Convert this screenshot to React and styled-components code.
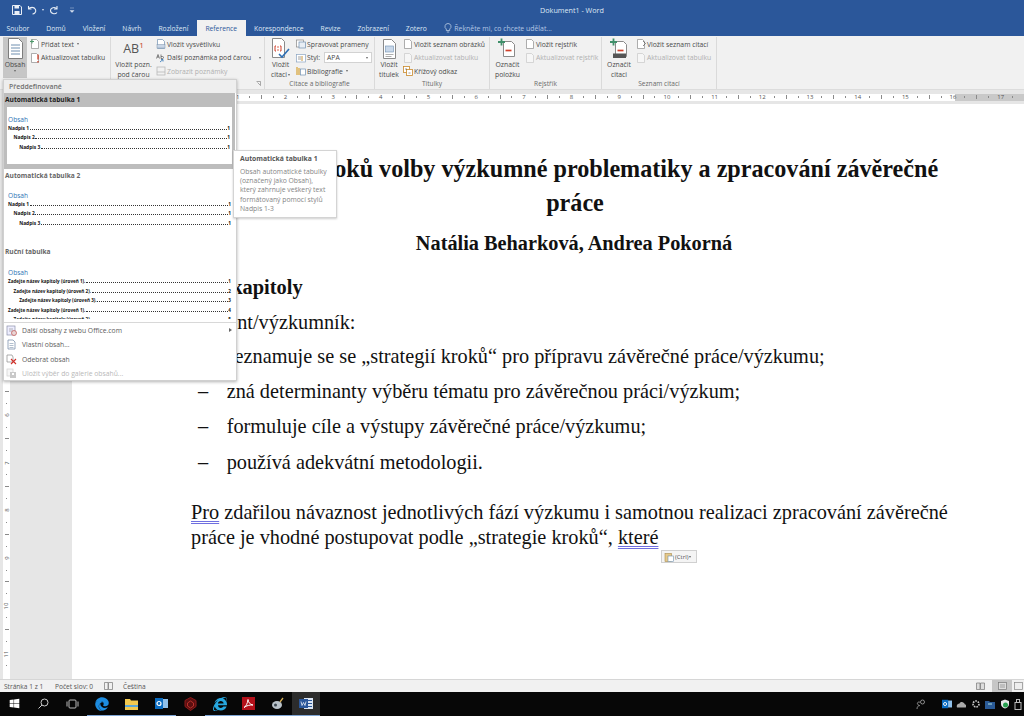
import React from 'react'
import styled, { createGlobalStyle } from 'styled-components'
import { FaEdge, FaInternetExplorer, FaWindows } from 'react-icons/fa'

const GlobalStyle = createGlobalStyle`
  html, body { margin: 0; padding: 0; background: #fff; }
  body { font-family: "Open Sans", "Liberation Sans", sans-serif; }
`

const Screen = styled.div`
  position: relative;
  width: 1024px;
  height: 716px;
  display: flex;
  flex-direction: column;
  overflow: hidden;
`

/* title bar + tabs */
const TitleBar = styled.div`
  height: 20px;
  background: #2b579a;
  color: #dfe7f3;
  display: flex;
  align-items: center;
  position: relative;
  padding-left: 12px;
  gap: 5px;
  flex: none;
`
const QatIcon = styled.svg`
  flex: none;
  margin-left: ${p => p.$ml || 0}px;
`
const DocTitle = styled.div`
  position: absolute;
  left: 0;
  right: 0;
  padding-left: 120px;
  text-align: center;
  font-size: 7.2px;
`
const TabBar = styled.div`
  height: 16px;
  background: #2b579a;
  display: flex;
  align-items: stretch;
  flex: none;
`
const Tab = styled.div`
  padding: 0 8.5px;
  display: flex;
  align-items: center;
  font-size: 6.75px;
  white-space: nowrap;
  margin-left: ${p => p.$first ? '-2px' : '0'};
  color: ${p => p.$active ? '#2b579a' : '#dfe7f3'};
  background: ${p => p.$active ? '#f1f1f1' : 'transparent'};
`
const TellMe = styled.div`
  display: flex;
  align-items: center;
  gap: 2px;
  margin-left: 9px;
  font-size: 6.9px;
  color: #b4c7e4;
`

/* ribbon */
const Ribbon = styled.div`
  height: 54px;
  background: #f1f1f1;
  display: flex;
  flex: none;
  border-bottom: 1px solid #dcdcdc;
  box-sizing: border-box;
`
const Group = styled.div`
  width: ${p => p.$w}px;
  box-sizing: border-box;
  display: flex;
  flex-direction: column;
  border-right: 1px solid #dadada;
  margin-top: 1px;
  padding-left: 3px;
  position: relative;
`
const GroupBody = styled.div`
  flex: 1;
  display: flex;
  gap: 3px;
`
const GroupLabel = styled.div`
  height: 11px;
  line-height: 12px;
  font-size: 6.6px;
  color: #6a6a6a;
  text-align: center;
  margin-right: 3px;
`
const Launcher = styled.svg`
  position: absolute;
  right: 3px;
  bottom: 3px;
  width: 5px;
  height: 5px;
`
const BigButton = styled.div`
  width: ${p => p.$w}px;
  height: 41px;
  display: flex;
  flex-direction: column;
  align-items: center;
  font-size: 6.8px;
  line-height: 9.6px;
  color: #4a4a4a;
  text-align: center;
  background: ${p => p.$active ? '#c6c6c6' : 'transparent'};
  svg { flex: none; }
`
const BigIconBox = styled.div`
  height: 23px;
  display: flex;
  align-items: center;
  justify-content: center;
  flex: none;
`
const FootMark = styled.sup`
  font-size: 8px;
  color: #c43e1c;
  line-height: 0;
`
const NoteGlyph = styled.div`
  font-size: 12.5px;
  color: #555;
`
const SmallCol = styled.div`
  display: flex;
  flex-direction: column;
  padding-top: 0.5px;
`
const SmallRow = styled.div`
  height: 13.5px;
  display: flex;
  align-items: center;
  gap: 1px;
  font-size: 6.8px;
  white-space: nowrap;
  color: ${p => p.$off ? '#b0b0b0' : '#4a4a4a'};
  svg { flex: none; }
`
const Caret = styled.span`
  display: inline-block;
  width: 0;
  height: 0;
  border-left: 1.7px solid transparent;
  border-right: 1.7px solid transparent;
  border-top: 2px solid ${p => p.$color || '#666'};
  margin-left: ${p => p.$gap ?? 2}px;
  vertical-align: middle;
`
const StyleSelect = styled.div`
  width: 48px;
  height: 11px;
  margin-left: 3px;
  background: #fff;
  border: 1px solid #d2d2d2;
  box-sizing: border-box;
  display: flex;
  align-items: center;
  justify-content: space-between;
  padding: 0 3px 0 2px;
`

/* rulers */
const Ruler = styled.div`
  height: 14px;
  background: #e6e6e6;
  display: flex;
  align-items: center;
  flex: none;
`
const RulerStrip = styled.div`
  width: 100%;
  height: 7px;
  display: flex;
  align-items: center;
  padding-left: 196px;
  box-sizing: border-box;
  overflow: hidden;
  background: linear-gradient(to right, #e6e6e6 72px, #fff 72px, #fff 955px, #c9c9c9 955px);
`
const Mark = styled.span`
  flex: none;
  width: ${p => p.$vertical ? '100%' : '11.925px'};
  height: ${p => p.$vertical ? '11.925px' : '100%'};
  display: flex;
  align-items: center;
  justify-content: center;
  font-size: 6px;
  color: #555;
`
const Tick = styled.i`
  display: block;
  background: #8a8a8a;
  width: ${p => p.$vertical ? (p.$tall ? '4px' : '1.4px') : '1px'};
  height: ${p => p.$vertical ? '1px' : (p.$tall ? '4px' : '1.4px')};
`
const VLabel = styled.span`
  transform: rotate(-90deg);
`

const Workspace = styled.div`
  flex: 1;
  display: flex;
  min-height: 0;
`
const Gutter = styled.div`
  width: 72px;
  flex: none;
  background: #e6e6e6;
  display: flex;
  padding-left: 3px;
  box-sizing: border-box;
`
const VRuler = styled.div`
  width: 7px;
  background: #fff;
  padding-top: 19px;
  box-sizing: border-box;
  display: flex;
  flex-direction: column;
  overflow: hidden;
`
const Page = styled.div`
  flex: 1;
  background: #fff;
  padding: 48px 67px 0 119px;
  color: #111;
  font-family: "Liberation Serif", "Times New Roman", serif;
  font-size: 20.3px;
  overflow: hidden;
`
const Title = styled.h1`
  margin: 0;
  padding-left: 2px;
  font-size: 24.15px;
  line-height: 34px;
  font-weight: bold;
  text-align: center;
`
const Authors = styled.div`
  margin-top: 11px;
  font-weight: bold;
  font-size: 20.3px;
  line-height: 24px;
  text-align: center;
`
const Heading = styled.h2`
  margin: 19px 0 0;
  font-size: 20.4px;
  line-height: 26px;
`
const Lead = styled.p`
  margin: 9px 0 0;
  line-height: 26px;
`
const Bullets = styled.ul`
  list-style: none;
  margin: 4px 0 0;
  padding: 0;
`
const Bullet = styled.li`
  height: 35.2px;
  line-height: 35.2px;
  display: flex;
  padding-left: 7px;
  gap: 18.5px;
`
const Para = styled.p`
  margin: 20px 0 0;
  line-height: 25px;
`
const Squiggle = styled.span`
  text-decoration: underline double #6f6fe0 1px;
  text-underline-offset: 2px;
`

/* Obsah dropdown */
const Dropdown = styled.div`
  position: absolute;
  left: 3px;
  top: 79px;
  width: 234px;
  height: 302px;
  background: #fff;
  border: 1px solid #d0d0d0;
  box-sizing: border-box;
  box-shadow: 0 1px 3px rgba(0,0,0,.3);
  display: flex;
  flex-direction: column;
`
const DropHead = styled.div`
  height: 13px;
  flex: none;
  background: #eee;
  font-size: 6.9px;
  font-weight: 600;
  line-height: 13px;
  padding-left: 5px;
  color: #707070;
`
const Gallery = styled.div`
  flex: none;
  background: ${p => p.$hot ? '#bdbdbd' : '#fff'};
  padding: 0 3px ${p => p.$hot ? '5px' : 0} 3px;
  box-sizing: border-box;
  height: ${p => p.$h}px;
  margin-right: ${p => p.$hot ? '1px' : 0};
  overflow: hidden;
`
const GalleryName = styled.div`
  height: 13.5px;
  line-height: 13.5px;
  font-size: 6.6px;
  font-weight: 700;
  margin-left: -2px;
  color: ${p => p.$hot ? '#222' : '#666'};
`
const Preview = styled.div`
  background: #fff;
  height: ${p => p.$h}px;
  padding: ${p => p.$top}px 2px 0 1px;
  overflow: hidden;
  box-sizing: border-box;
`
const PreviewTitle = styled.div`
  font-size: 6.6px;
  height: 9px;
  line-height: 9px;
  color: #2e74b5;
`
const TocRow = styled.div`
  height: 9.5px;
  display: flex;
  align-items: baseline;
  font-size: ${p => p.$manual ? '4.6px' : '4.9px'};
  line-height: 9.5px;
  font-weight: 700;
  color: #111;
  white-space: nowrap;
  padding-left: ${p => p.$level * 5.6}px;
`
const Leader = styled.span`
  flex: 1;
  border-bottom: 1px dotted #333;
  margin: 0 0.5px;
`
const DropMenu = styled.div`
  border-top: 1px solid #d8d8d8;
  flex: 1;
  display: flex;
  flex-direction: column;
`
const MenuRow = styled.div`
  height: 14.5px;
  display: flex;
  align-items: center;
  padding: 0 4px 0 2px;
  font-size: 6.8px;
  color: ${p => p.$off ? '#b8b8b8' : '#5c5c5c'};
`
const MenuIcon = styled.div`
  width: 16px;
  flex: none;
  display: flex;
`
const MenuText = styled.span`
  flex: 1;
`
const MenuArrow = styled.span`
  width: 0;
  height: 0;
  border-top: 2px solid transparent;
  border-bottom: 2px solid transparent;
  border-left: 3px solid #666;
`

const Tip = styled.div`
  position: absolute;
  left: 233px;
  top: 150px;
  width: 104px;
  height: 68px;
  box-sizing: border-box;
  background: #fff;
  border: 1px solid #d4d4d4;
  box-shadow: 0 1px 2px rgba(0,0,0,.2);
  padding: 3px 2px 0 6px;
  font-size: 6.8px;
  line-height: 9.3px;
  color: #858585;
`
const TipTitle = styled.div`
  font-weight: 700;
  color: #555;
  margin-bottom: 3.5px;
`
const PasteChip = styled.div`
  position: absolute;
  left: 661px;
  top: 550px;
  width: 36px;
  height: 13px;
  box-sizing: border-box;
  background: #f4f4f4;
  border: 1px solid #d0d0d0;
  font-size: 6px;
  color: #555;
  display: flex;
  align-items: center;
  padding-left: 2px;
  gap: 1px;
`

/* status + taskbar */
const StatusBar = styled.div`
  height: 13px;
  flex: none;
  background: #f1f1f1;
  border-top: 1px solid #d6d6d6;
  box-sizing: border-box;
  display: flex;
  align-items: center;
  padding-left: 4px;
  font-size: 6.6px;
  color: #555;
`
const StatusItem = styled.span`
  width: ${p => p.$w}px;
  flex: none;
  display: flex;
  align-items: center;
`
const ViewButtons = styled.div`
  margin-left: auto;
  display: flex;
  height: 100%;
  align-items: stretch;
`
const ViewButton = styled.div`
  width: ${p => p.$w}px;
  display: flex;
  align-items: center;
  justify-content: center;
  background: ${p => p.$active ? '#c6c6c6' : 'transparent'};
`
const Taskbar = styled.div`
  height: 24px;
  flex: none;
  background: #070707;
  display: flex;
  align-items: stretch;
`
const TaskApp = styled.div`
  width: ${p => p.$w || 29}px;
  flex: none;
  box-sizing: border-box;
  display: flex;
  align-items: center;
  justify-content: center;
  background: ${p => p.$active ? '#2c2c2c' : 'transparent'};
  border-bottom: 1.5px solid ${p => p.$running ? '#7fa6d6' : 'transparent'};
  background-clip: padding-box;
`
const Tray = styled.div`
  margin-left: auto;
  display: flex;
  align-items: center;
  gap: 4.5px;
  padding-right: 2px;
`
const TraySpacer = styled.span`
  width: 7px;
`

/* icons */
const Sheet = ({ c = '#8c8c8c' }) => <path d="M1.500.5h5l2 2v7h-7z" fill="#fff" stroke={c} strokeWidth=".7" />

const Small = ({ kind }) => (
  <svg width="10" height="10" viewBox="0 0 10 10">
    {kind === 'add' && <><Sheet /><path d="M0 2.500h4M2 .5v4" stroke="#4c9a6a" strokeWidth="1" /></>}
    {kind === 'update' && <><Sheet /><path d="M8 1.500v5M8 8v1.400" stroke="#d0402a" strokeWidth="1.300" /></>}
    {kind === 'updateOff' && <g opacity=".4"><Sheet /></g>}
    {kind === 'end' && <><Sheet c="#6f8fb0" /><rect x="1" y="5.500" width="8" height="3.500" fill="#c9d6e6" stroke="#7c93ad" strokeWidth=".5" /></>}
    {kind === 'next' && <><path d="M.5 5.500l1.500-4 1.500 4M1 4h2M5 1.500v4h1.500a1 1 0 0 0 0-2H5" fill="none" stroke="#555" strokeWidth=".7" /><path d="M4 9l3-2.500M7 6.500v2M7 6.500H5" fill="none" stroke="#2e74b5" strokeWidth=".8" /></>}
    {kind === 'show' && <g opacity=".4"><rect x="1" y="1" width="8" height="8" fill="none" stroke="#555" strokeWidth=".7" /><path d="M1 6h8" stroke="#555" strokeWidth=".7" /></g>}
    {kind === 'manage' && <><rect x=".5" y="1" width="7" height="7" fill="#fff" stroke="#888" strokeWidth=".7" /><rect x="3" y="3" width="6.500" height="6" fill="#e8eef5" stroke="#6f8fb0" strokeWidth=".7" /></>}
    {kind === 'style' && <><rect x=".5" y="1.500" width="9" height="7.500" fill="#fff" stroke="#8aa4c2" strokeWidth=".7" /><path d="M2 4h3M2 6h3" stroke="#777" strokeWidth=".7" /><path d="M6 3v5" stroke="#c08a2b" strokeWidth=".9" /></>}
    {kind === 'bib' && <><path d="M1 1v8M3 2v7" stroke="#d49a20" strokeWidth="1.100" /><rect x="4.500" y="3" width="5" height="6" fill="#fff" stroke="#6f8fb0" strokeWidth=".7" /></>}
    {kind === 'cross' && <><rect x=".5" y=".5" width="6" height="6" fill="#fff" stroke="#c9892b" strokeWidth=".8" /><rect x="3.500" y="3.500" width="6" height="6" fill="#fff" stroke="#c9892b" strokeWidth=".8" /><path d="M2 3h2M5.500 7h2" stroke="#555" strokeWidth=".6" /></>}
    {kind === 'page' && <Sheet />}
    {kind === 'pageInk' && <><Sheet /><path d="M7 2l2.500 2.500L7 7" fill="none" stroke="#555" strokeWidth=".7" /></>}
  </svg>
)

const Big = ({ kind }) => {
  if (kind === 'toc') return (
    <svg width="17" height="21" viewBox="0 0 17 21">
      <path d="M1.500.5h10l4 4v16h-14z" fill="#fff" stroke="#7d7d7d" />
      <path d="M4 7h9M4 10h9M4 13h9M4 16h9" stroke="#6f8fb0" strokeWidth="1" />
    </svg>
  )
  if (kind === 'citation') return (
    <svg width="19" height="21" viewBox="0 0 19 21">
      <path d="M1.500.5h9l3 3v16h-12z" fill="#fff" stroke="#8a8a8a" />
      <path d="M5 8H4v5h1M9 8h1v5H9" stroke="#d0402a" fill="none" />
      <path d="M6 9h2M6 12h2" stroke="#d0402a" strokeWidth=".8" />
      <path d="M8 16l3 3 7-8" stroke="#2f6fb5" strokeWidth="1.600" fill="none" />
    </svg>
  )
  if (kind === 'caption') return (
    <svg width="15" height="20" viewBox="0 0 15 20">
      <path d="M1.500.5h8l4 4v15h-12z" fill="#fff" stroke="#8a8a8a" />
      <rect x="3.500" y="7" width="8" height="6" fill="#c9d8ea" stroke="#6f8fb0" strokeWidth=".6" />
      <path d="M3.500 15.500h8M3.500 17.500h6" stroke="#999" strokeWidth=".8" />
    </svg>
  )
  return (
    <svg width="19" height="21" viewBox="0 0 19 21">
      <path d="M5.500 3.500h8l3 3v12h-11z" fill="#fff" stroke="#8a8a8a" />
      <path d="M0 4h7M3.500.5v7" stroke="#3f8f6a" strokeWidth="1.800" />
      <path d="M7.500 12.500h6" stroke="#d0402a" strokeWidth="1.700" />
      {kind === 'markCite' && <rect x="3" y="15.500" width="13" height="4.500" fill="#555" />}
    </svg>
  )
}

const MenuGlyph = ({ kind }) => (
  <svg width="11" height="11" viewBox="0 0 11 11">
    {kind === 'web' && <><rect x="1" y="1" width="8" height="9" fill="#eef" stroke="#8a8fa8" strokeWidth=".7" /><path d="M3 4h4M3 6h4" stroke="#888" strokeWidth=".6" /><circle cx="8" cy="8" r="2.500" fill="#e9d6d6" stroke="#c0504d" strokeWidth=".7" /></>}
    {kind === 'own' && <><path d="M2 1h5l2 2v7H2z" fill="#fff" stroke="#7d93ad" strokeWidth=".8" /><path d="M3.500 4.500h4M3.500 6.500h4M3.500 8.500h4" stroke="#7d93ad" strokeWidth=".6" /></>}
    {kind === 'remove' && <><path d="M1 1h5l1 2v5H1z" fill="#fff" stroke="#8a8a8a" strokeWidth=".7" /><path d="M5 5l5 5M10 5l-5 5" stroke="#d0302a" strokeWidth="1.100" /></>}
    {kind === 'save' && <g opacity=".45"><rect x="1" y="1" width="6" height="7" fill="#eee" stroke="#999" strokeWidth=".7" /><rect x="4" y="4" width="6" height="6" fill="#888" /><rect x="6" y="5" width="2" height="2" fill="#fff" /></g>}
  </svg>
)

const ManualRows = [
  [0, 'Zadejte název kapitoly (úroveň 1).', 1],
  [1, 'Zadejte název kapitoly (úroveň 2).', 2],
  [2, 'Zadejte název kapitoly (úroveň 3).', 3],
  [0, 'Zadejte název kapitoly (úroveň 1).', 4],
  [1, 'Zadejte název kapitoly (úroveň 2).', 5],
]
const AutoRows = [[0, 'Nadpis 1', 1], [1, 'Nadpis 2', 1], [2, 'Nadpis 3', 1]]

function Toc({ rows, manual }) {
  return (
    <>
      <PreviewTitle>Obsah</PreviewTitle>
      {rows.map(([level, text, page], i) => (
        <TocRow key={i} $level={level} $manual={manual}>
          {text}<Leader />{page}
        </TocRow>
      ))}
    </>
  )
}

function HRulerMarks() {
  const marks = []
  for (let i = 1; i < 70; i++) {
    marks.push(
      <Mark key={i}>
        {i % 4 === 0 ? i / 4 : <Tick $tall={i % 2 === 0} />}
      </Mark>
    )
  }
  return marks
}

function VRulerMarks() {
  const marks = []
  for (let i = 0; i < 46; i++) {
    marks.push(
      <Mark key={i} $vertical>
        {i % 4 === 0 ? <VLabel>{i / 4}</VLabel> : <Tick $vertical $tall={i % 2 === 0} />}
      </Mark>
    )
  }
  return marks
}

const tabs = ['Soubor', 'Domů', 'Vložení', 'Návrh', 'Rozložení', 'Reference', 'Korespondence', 'Revize', 'Zobrazení', 'Zotero']

const bullets = [
  'seznamuje se se „strategií kroků“ pro přípravu závěrečné práce/výzkumu;',
  'zná determinanty výběru tématu pro závěrečnou práci/výzkum;',
  'formuluje cíle a výstupy závěrečné práce/výzkumu;',
  'používá adekvátní metodologii.',
]

const AcrobatIcon = () => (
  <svg width="13" height="13" viewBox="0 0 13 13">
    <rect width="13" height="13" fill="#b3101a" />
    <path d="M2 10.500c2-1 3.500-4 4-8 .3 3 2 5 5 5.500-3-.2-6.500.5-9 2.500z" fill="none" stroke="#fff" strokeWidth="1" />
  </svg>
)
const ExplorerIcon = () => (
  <svg width="13" height="12" viewBox="0 0 13 12">
    <path d="M0 1h5l1 1.500h7V12H0z" fill="#f2c94f" />
    <rect y="7" width="13" height="2" fill="#5aa7d8" />
  </svg>
)
const OutlookTile = ({ size = 13 }) => (
  <svg width={size} height={size} viewBox="0 0 13 13">
    <rect x="5" y="2" width="8" height="9" fill="#8fc0ea" />
    <rect y="1" width="8" height="11" fill="#0a6bc0" />
    <circle cx="4" cy="6.500" r="2" fill="none" stroke="#fff" strokeWidth="1.200" />
  </svg>
)
const ShieldIcon = () => (
  <svg width="13" height="14" viewBox="0 0 13 14">
    <path d="M6.500.5l5.500 3v6l-5.500 4-5.500-4v-6z" fill="#5a0f10" stroke="#8f1a1a" />
    <path d="M6.500 4l3 2v3l-3 2-3-2V6z" fill="none" stroke="#b8302a" />
  </svg>
)
const SatelliteIcon = () => (
  <svg width="14" height="14" viewBox="0 0 14 14">
    <ellipse cx="6" cy="8" rx="5" ry="4" fill="#b9c2c9" />
    <circle cx="4.500" cy="8" r="1.500" fill="#3b4650" />
    <path d="M9 5l3-4" stroke="#d9b25a" strokeWidth="1.300" />
  </svg>
)
const WordIcon = () => (
  <svg width="14" height="13" viewBox="0 0 14 13">
    <rect x="5" y="1" width="9" height="11" fill="#dce6f4" />
    <path d="M9 3.500h4M9 6.500h4M9 9.500h4" stroke="#2b579a" strokeWidth="1" />
    <rect y="2" width="9" height="9" fill="#2b579a" />
    <path d="M2 4.500l1 4 1.500-3 1.500 3 1-4" fill="none" stroke="#fff" strokeWidth=".7" />
  </svg>
)
const TaskViewIcon = () => (
  <svg width="13" height="10" viewBox="0 0 13 10">
    <rect x="3" y="1" width="7" height="8" rx="1" fill="none" stroke="#bbb" />
    <path d="M1 2.500v5M12 2.500v5" stroke="#bbb" />
  </svg>
)
const SearchIcon = () => (
  <svg width="11" height="11" viewBox="0 0 11 11">
    <circle cx="6.500" cy="4.500" r="3.500" fill="none" stroke="#ccc" />
    <path d="M4 7l-3.500 3.500" stroke="#ccc" />
  </svg>
)

export default function App() {
  return (
    <Screen>
      <GlobalStyle />
      <TitleBar>
        <QatIcon width="10" height="10" viewBox="0 0 10 10">
          <path d="M.5.500h7.500l1.500 1.500v7.500h-9z" fill="none" stroke="#e8eef6" />
          <rect x="2.500" y="1" width="4.500" height="2.500" fill="#e8eef6" />
          <rect x="2.500" y="6" width="5" height="3" fill="#e8eef6" />
        </QatIcon>
        <QatIcon width="10" height="10" viewBox="0 0 10 10">
          <path d="M1.500 1v3h3M1.500 4C3 2 7 1.500 8.500 4.500 9.500 7 7.500 9 5.500 9" fill="none" stroke="#e8eef6" strokeWidth="1.100" />
        </QatIcon>
        <Caret $color="#dfe7f3" $gap={0} />
        <QatIcon width="10" height="10" viewBox="0 0 10 10">
          <path d="M8 1v3H5M8 4C6 1.500 1.500 2.500 1.500 5.500S6 10 8 7.500" fill="none" stroke="#e8eef6" strokeWidth="1.100" />
        </QatIcon>
        <QatIcon $ml={5} width="6" height="6" viewBox="0 0 6 6">
          <path d="M1 1h4M1 3.500h4l-2 2z" fill="#dfe7f3" stroke="#dfe7f3" strokeWidth=".4" />
        </QatIcon>
        <DocTitle>Dokument1 - Word</DocTitle>
      </TitleBar>

      <TabBar>
        {tabs.map((t, i) => (
          <Tab key={t} $first={i === 0} $active={t === 'Reference'}>{t}</Tab>
        ))}
        <TellMe>
          <svg width="8" height="10" viewBox="0 0 8 10">
            <path d="M4 .5a3 3 0 0 1 1.700 5.500V7.500H2.300V6A3 3 0 0 1 4 .5zM2.800 9h2.400" fill="none" stroke="#cfdcee" strokeWidth=".7" />
          </svg>
          Řekněte mi, co chcete udělat...
        </TellMe>
      </TabBar>

      <Ribbon>
        <Group $w={111}>
          <GroupBody>
            <BigButton $w={24} $active>
              <BigIconBox><Big kind="toc" /></BigIconBox>
              Obsah
              <Caret $gap={0} />
            </BigButton>
            <SmallCol>
              <SmallRow><Small kind="add" />Přidat text<Caret /></SmallRow>
              <SmallRow><Small kind="update" />Aktualizovat tabulku</SmallRow>
            </SmallCol>
          </GroupBody>
        </Group>

        <Group $w={154}>
          <GroupBody>
            <BigButton $w={39}>
              <BigIconBox><NoteGlyph>AB<FootMark>1</FootMark></NoteGlyph></BigIconBox>
              Vložit pozn.<br />pod čarou
            </BigButton>
            <SmallCol>
              <SmallRow><Small kind="end" />Vložit vysvětlivku</SmallRow>
              <SmallRow><Small kind="next" />Další poznámka pod čarou<Caret $gap={7} /></SmallRow>
              <SmallRow $off><Small kind="show" />Zobrazit poznámky</SmallRow>
            </SmallCol>
          </GroupBody>
          <Launcher viewBox="0 0 5 5"><path d="M.5.500h4v4M1.500 1.500l3 3" fill="none" stroke="#777" strokeWidth=".6" /></Launcher>
        </Group>

        <Group $w={110}>
          <GroupBody>
            <BigButton $w={25}>
              <BigIconBox><Big kind="citation" /></BigIconBox>
              <span>Vložit<br />citaci<Caret $gap={1} /></span>
            </BigButton>
            <SmallCol>
              <SmallRow><Small kind="manage" />Spravovat prameny</SmallRow>
              <SmallRow><Small kind="style" />Styl:<StyleSelect>APA<Caret /></StyleSelect></SmallRow>
              <SmallRow><Small kind="bib" />Bibliografie<Caret /></SmallRow>
            </SmallCol>
          </GroupBody>
          <GroupLabel>Citace a bibliografie</GroupLabel>
        </Group>

        <Group $w={115}>
          <GroupBody>
            <BigButton $w={22}>
              <BigIconBox><Big kind="caption" /></BigIconBox>
              Vložit<br />titulek
            </BigButton>
            <SmallCol>
              <SmallRow><Small kind="page" />Vložit seznam obrázků</SmallRow>
              <SmallRow $off><Small kind="updateOff" />Aktualizovat tabulku</SmallRow>
              <SmallRow><Small kind="cross" />Křížový odkaz</SmallRow>
            </SmallCol>
          </GroupBody>
          <GroupLabel>Titulky</GroupLabel>
        </Group>

        <Group $w={112}>
          <GroupBody>
            <BigButton $w={29}>
              <BigIconBox><Big kind="mark" /></BigIconBox>
              Označit<br />položku
            </BigButton>
            <SmallCol>
              <SmallRow><Small kind="page" />Vložit rejstřík</SmallRow>
              <SmallRow $off><Small kind="updateOff" />Aktualizovat rejstřík</SmallRow>
            </SmallCol>
          </GroupBody>
          <GroupLabel>Rejstřík</GroupLabel>
        </Group>

        <Group $w={115}>
          <GroupBody>
            <BigButton $w={28}>
              <BigIconBox><Big kind="markCite" /></BigIconBox>
              Označit<br />citaci
            </BigButton>
            <SmallCol>
              <SmallRow><Small kind="pageInk" />Vložit seznam citací</SmallRow>
              <SmallRow $off><Small kind="updateOff" />Aktualizovat tabulku</SmallRow>
            </SmallCol>
          </GroupBody>
          <GroupLabel>Seznam citací</GroupLabel>
        </Group>
      </Ribbon>

      <Ruler>
        <RulerStrip><HRulerMarks /></RulerStrip>
      </Ruler>

      <Workspace>
        <Gutter>
          <VRuler><VRulerMarks /></VRuler>
        </Gutter>
        <Page>
          <Title>Strategie kroků volby výzkumné problematiky a zpracování závěrečné práce</Title>
          <Authors>Natália Beharková, Andrea Pokorná</Authors>
          <Heading>Cíle kapitoly</Heading>
          <Lead>Student/výzkumník:</Lead>
          <Bullets>
            {bullets.map(t => (
              <Bullet key={t}><span>–</span><span>{t}</span></Bullet>
            ))}
          </Bullets>
          <Para>
            <Squiggle>Pro</Squiggle> zdařilou návaznost jednotlivých fází výzkumu i samotnou realizaci zpracování závěrečné práce je vhodné postupovat podle „strategie kroků“, <Squiggle>které</Squiggle>
          </Para>
        </Page>
      </Workspace>

      <StatusBar>
        <StatusItem $w={51}>Stránka 1 z 1</StatusItem>
        <StatusItem $w={49}>Počet slov: 0</StatusItem>
        <StatusItem $w={19}>
          <svg width="9" height="8" viewBox="0 0 9 8"><path d="M.5.500h3.500v7H.5zM4.500.500h4v7h-4z" fill="none" stroke="#777" strokeWidth=".7" /></svg>
        </StatusItem>
        <StatusItem $w={30}>Čeština</StatusItem>
        <ViewButtons>
          <ViewButton $w={23}>
            <svg width="9" height="8" viewBox="0 0 9 8"><path d="M.5 1h3.500v6.500H.5zM4.500 1h4v6.500h-4z" fill="#ddd" stroke="#777" strokeWidth=".7" /></svg>
          </ViewButton>
          <ViewButton $w={20} $active>
            <svg width="9" height="8" viewBox="0 0 9 8"><rect x=".5" y=".5" width="8" height="7" fill="#ddd" stroke="#777" strokeWidth=".7" /><path d="M2 3h5M2 5h5" stroke="#777" strokeWidth=".6" /></svg>
          </ViewButton>
          <ViewButton $w={12}>
            <svg width="9" height="8" viewBox="0 0 9 8"><rect x=".5" y=".5" width="8" height="7" fill="#eee" stroke="#888" strokeWidth=".7" /></svg>
          </ViewButton>
        </ViewButtons>
      </StatusBar>

      <Taskbar>
        <TaskApp><FaWindows size={11} color="#fff" /></TaskApp>
        <TaskApp><SearchIcon /></TaskApp>
        <TaskApp><TaskViewIcon /></TaskApp>
        <TaskApp $running><FaEdge size={14} color="#1d8ce0" /></TaskApp>
        <TaskApp $running $w={30}><ExplorerIcon /></TaskApp>
        <TaskApp $running $w={30}><OutlookTile /></TaskApp>
        <TaskApp><ShieldIcon /></TaskApp>
        <TaskApp $running><FaInternetExplorer size={14} color="#27a8e0" /></TaskApp>
        <TaskApp $running><AcrobatIcon /></TaskApp>
        <TaskApp $running><SatelliteIcon /></TaskApp>
        <TaskApp $running $active $w={28}><WordIcon /></TaskApp>
        <Tray>
          <svg width="10" height="11" viewBox="0 0 10 11"><circle cx="6.500" cy="3" r="2" fill="none" stroke="#aaa" strokeWidth=".8" /><path d="M1 10c0-2 1-3.500 3-3.500M4 3.500a1.500 1.500 0 1 0-1 2.500" fill="none" stroke="#aaa" strokeWidth=".8" /></svg>
          <TraySpacer />
          <OutlookTile size={10} />
          <svg width="10" height="7" viewBox="0 0 10 7"><path d="M1 6.500h8a1.500 1.500 0 0 0 0-3C8 1 5 0 3.500 2.500 2 2.500 0 4 1 6.500z" fill="#aaa" /></svg>
          <svg width="10" height="10" viewBox="0 0 10 10"><circle cx="5" cy="5" r="3" fill="none" stroke="#ccc" strokeWidth="1.600" strokeDasharray="1.600 1" /></svg>
          <svg width="10" height="9" viewBox="0 0 10 9"><path d="M0 1h4l1 1h5v7H0z" fill="#2a5a96" /><path d="M3 4h4" stroke="#cfe" strokeWidth=".8" /></svg>
          <svg width="10" height="10" viewBox="0 0 10 10"><path d="M5 .5l4 1.500v3c0 2.500-2 4-4 4.500-2-.5-4-2-4-4.500V2z" fill="#e8e8e8" /><circle cx="5.500" cy="6" r="2.500" fill="#27a04f" /></svg>
          <svg width="8" height="11" viewBox="0 0 8 11"><rect x="1" y="3.500" width="6" height="7" fill="none" stroke="#bbb" /><rect x="2.500" y=".5" width="3" height="3" fill="none" stroke="#bbb" /></svg>
        </Tray>
      </Taskbar>

      <Dropdown>
        <DropHead>Předdefinované</DropHead>
        <Gallery $hot $h={76}>
          <GalleryName $hot>Automatická tabulka 1</GalleryName>
          <Preview $h={57} $top={8}><Toc rows={AutoRows} /></Preview>
        </Gallery>
        <Gallery $h={76}>
          <GalleryName>Automatická tabulka 2</GalleryName>
          <Preview $h={62} $top={8}><Toc rows={AutoRows} /></Preview>
        </Gallery>
        <Gallery $h={77}>
          <GalleryName>Ruční tabulka</GalleryName>
          <Preview $h={60} $top={9.500}><Toc rows={ManualRows} manual /></Preview>
        </Gallery>
        <DropMenu>
          <MenuRow><MenuIcon><MenuGlyph kind="web" /></MenuIcon><MenuText>Další obsahy z webu Office.com</MenuText><MenuArrow /></MenuRow>
          <MenuRow><MenuIcon><MenuGlyph kind="own" /></MenuIcon><MenuText>Vlastní obsah...</MenuText></MenuRow>
          <MenuRow><MenuIcon><MenuGlyph kind="remove" /></MenuIcon><MenuText>Odebrat obsah</MenuText></MenuRow>
          <MenuRow $off><MenuIcon><MenuGlyph kind="save" /></MenuIcon><MenuText>Uložit výběr do galerie obsahů...</MenuText></MenuRow>
        </DropMenu>
      </Dropdown>

      <Tip>
        <TipTitle>Automatická tabulka 1</TipTitle>
        Obsah automatické tabulky<br />
        (označený jako Obsah),<br />
        který zahrnuje veškerý text<br />
        formátovaný pomocí stylů<br />
        Nadpis 1-3
      </Tip>

      <PasteChip>
        <svg width="10" height="10" viewBox="0 0 10 10">
          <rect x="1" y="1.500" width="6.500" height="8" fill="#e6c98a" stroke="#a98a4c" strokeWidth=".6" />
          <rect x="4" y="4" width="5.500" height="5.500" fill="#fff" stroke="#6f8fb0" strokeWidth=".6" />
        </svg>
        (Ctrl)<Caret $gap={0} />
      </PasteChip>
    </Screen>
  )
}
